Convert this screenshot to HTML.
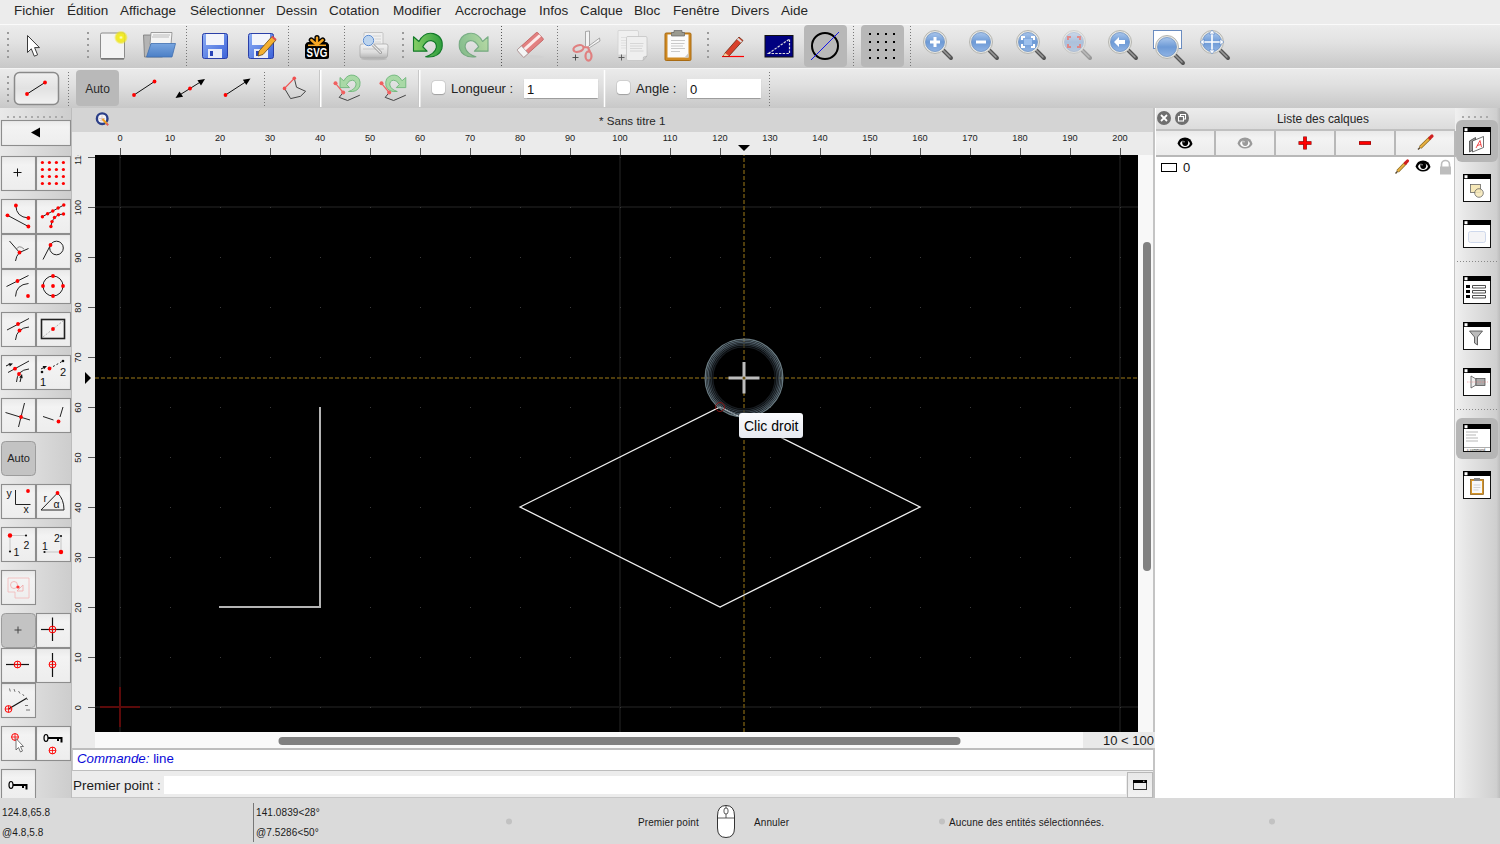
<!DOCTYPE html><html><head><meta charset="utf-8"><style>
*{margin:0;padding:0;box-sizing:border-box}
html,body{width:1500px;height:844px;overflow:hidden;background:#ececec;font-family:"Liberation Sans",sans-serif;color:#222}
.a{position:absolute}
.t{position:absolute;white-space:nowrap;line-height:1}
#menubar{left:0;top:0;width:1500px;height:24px;background:#ececec}
#menubar span{position:absolute;top:4px;font-size:13.5px;color:#262626;line-height:1}
#tb1{left:0;top:24px;width:1500px;height:44px;background:linear-gradient(#ececec,#e2e2e2 40%,#c8c8c8);border-top:1px solid #fafafa}
#tb2{left:0;top:68px;width:1500px;height:40px;background:linear-gradient(#ebebeb,#e0e0e0 40%,#c8c8c8);border-top:1px solid #f4f4f4}
#leftp{left:0;top:108px;width:72px;height:691px;background:linear-gradient(90deg,#e9e9e9,#cdcdcd);border-right:1px solid #bcbcbc}
#titlebar{left:72px;top:108px;width:1083px;height:24px;background:#d4d4d4}
#hruler{left:72px;top:132px;width:1082px;height:23px;background:#ebebeb}
#vruler{left:72px;top:155px;width:23px;height:593px;background:#ebebeb}
#canvas{left:95px;top:155px;width:1043px;height:577px;background:#000}
#vscroll{left:1138px;top:155px;width:16px;height:577px;background:#f8f8f8}
#hscroll{left:95px;top:732px;width:1059px;height:16px;background:#f9f9f9}
#cmd{left:72px;top:748px;width:1081px;height:23px;background:#fff;border-top:2px solid #bdbdbd;border-bottom:1px solid #bdbdbd;border-left:1px solid #c8c8c8}
#prompt{left:72px;top:771px;width:1083px;height:28px;background:#ececec}
#layers{left:1153px;top:108px;width:301px;height:691px;background:#fff;border-left:2px solid #c4c4c4}
#dock{left:1454px;top:108px;width:46px;height:691px;background:linear-gradient(90deg,#f0f0f0,#e6e6e6 25%,#cfcfcf 92%,#bdbdbd);border-left:1px solid #c4c4c4}
#status{left:0;top:798px;width:1500px;height:46px;background:#dadada}
.inp{position:absolute;background:#fff;box-shadow:0 0.5px 1px rgba(0,0,0,.25)}
.cb{position:absolute;background:#fff;border-radius:3px;box-shadow:0 0 0 0.5px rgba(0,0,0,.12),0 0.5px 1px rgba(0,0,0,.2)}
.btn{position:absolute;width:34px;height:34px;background:linear-gradient(#f6f6f6,#e2e2e2);border:1px solid #8e8e8e}
.ruln{position:absolute;font-size:9.2px;color:#222;line-height:1;white-space:nowrap}
.st{position:absolute;font-size:10px;color:#1a1a1a;line-height:1;white-space:nowrap;letter-spacing:0.1px}
</style></head><body>
<div id="menubar" class="a"><span style="left:14px">Fichier</span><span style="left:67px">Édition</span><span style="left:120px">Affichage</span><span style="left:190px">Sélectionner</span><span style="left:276px">Dessin</span><span style="left:329px">Cotation</span><span style="left:393px">Modifier</span><span style="left:455px">Accrochage</span><span style="left:539px">Infos</span><span style="left:580px">Calque</span><span style="left:634px">Bloc</span><span style="left:673px">Fenêtre</span><span style="left:731px">Divers</span><span style="left:781px">Aide</span></div>
<div id="tb1" class="a"></div>
<div id="tb2" class="a"></div>
<div id="leftp" class="a"></div>
<div id="titlebar" class="a"></div>
<div id="hruler" class="a"></div>
<div id="vruler" class="a"></div>
<div id="canvas" class="a"></div>
<div id="vscroll" class="a"></div>
<div id="hscroll" class="a"></div>
<div id="cmd" class="a"></div>
<div id="prompt" class="a"></div>
<div id="layers" class="a"></div>
<div id="dock" class="a"></div>
<div id="status" class="a"></div>
<div class="cb" style="left:432px;top:81px;width:13px;height:13px"></div>
<div class="t" style="left:451px;top:82px;font-size:13px;color:#222">Longueur :</div>
<div class="inp" style="left:524px;top:79px;width:74px;height:19px"></div>
<div class="t" style="left:527px;top:83px;font-size:13px;color:#111">1</div>
<div class="cb" style="left:617px;top:81px;width:13px;height:13px"></div>
<div class="t" style="left:636px;top:82px;font-size:13px;color:#222">Angle :</div>
<div class="inp" style="left:687px;top:79px;width:74px;height:19px"></div>
<div class="t" style="left:690px;top:83px;font-size:13px;color:#111">0</div>
<div class="t" style="left:599px;top:114.5px;font-size:11.6px;color:#262626">* Sans titre 1</div>
<div class="a" style="left:95px;top:131px;width:1043px;height:17px;overflow:hidden">
<div class="ruln" style="left:5px;top:3px;width:40px;text-align:center">0</div>
<div class="ruln" style="left:55px;top:3px;width:40px;text-align:center">10</div>
<div class="ruln" style="left:105px;top:3px;width:40px;text-align:center">20</div>
<div class="ruln" style="left:155px;top:3px;width:40px;text-align:center">30</div>
<div class="ruln" style="left:205px;top:3px;width:40px;text-align:center">40</div>
<div class="ruln" style="left:255px;top:3px;width:40px;text-align:center">50</div>
<div class="ruln" style="left:305px;top:3px;width:40px;text-align:center">60</div>
<div class="ruln" style="left:355px;top:3px;width:40px;text-align:center">70</div>
<div class="ruln" style="left:405px;top:3px;width:40px;text-align:center">80</div>
<div class="ruln" style="left:455px;top:3px;width:40px;text-align:center">90</div>
<div class="ruln" style="left:505px;top:3px;width:40px;text-align:center">100</div>
<div class="ruln" style="left:555px;top:3px;width:40px;text-align:center">110</div>
<div class="ruln" style="left:605px;top:3px;width:40px;text-align:center">120</div>
<div class="ruln" style="left:655px;top:3px;width:40px;text-align:center">130</div>
<div class="ruln" style="left:705px;top:3px;width:40px;text-align:center">140</div>
<div class="ruln" style="left:755px;top:3px;width:40px;text-align:center">150</div>
<div class="ruln" style="left:805px;top:3px;width:40px;text-align:center">160</div>
<div class="ruln" style="left:855px;top:3px;width:40px;text-align:center">170</div>
<div class="ruln" style="left:905px;top:3px;width:40px;text-align:center">180</div>
<div class="ruln" style="left:955px;top:3px;width:40px;text-align:center">190</div>
<div class="ruln" style="left:1005px;top:3px;width:40px;text-align:center">200</div>
</div>
<div class="a" style="left:72px;top:155px;width:16px;height:577px;overflow:hidden">
<div class="ruln" style="left:-12.7px;top:547.5px;width:40px;text-align:center;transform:rotate(-90deg)">0</div>
<div class="ruln" style="left:-12.7px;top:497.5px;width:40px;text-align:center;transform:rotate(-90deg)">10</div>
<div class="ruln" style="left:-12.7px;top:447.5px;width:40px;text-align:center;transform:rotate(-90deg)">20</div>
<div class="ruln" style="left:-12.7px;top:397.5px;width:40px;text-align:center;transform:rotate(-90deg)">30</div>
<div class="ruln" style="left:-12.7px;top:347.5px;width:40px;text-align:center;transform:rotate(-90deg)">40</div>
<div class="ruln" style="left:-12.7px;top:297.5px;width:40px;text-align:center;transform:rotate(-90deg)">50</div>
<div class="ruln" style="left:-12.7px;top:247.5px;width:40px;text-align:center;transform:rotate(-90deg)">60</div>
<div class="ruln" style="left:-12.7px;top:197.5px;width:40px;text-align:center;transform:rotate(-90deg)">70</div>
<div class="ruln" style="left:-12.7px;top:147.5px;width:40px;text-align:center;transform:rotate(-90deg)">80</div>
<div class="ruln" style="left:-12.7px;top:97.5px;width:40px;text-align:center;transform:rotate(-90deg)">90</div>
<div class="ruln" style="left:-12.7px;top:47.5px;width:40px;text-align:center;transform:rotate(-90deg)">100</div>
<div class="ruln" style="left:-12.7px;top:-2.5px;width:40px;text-align:center;transform:rotate(-90deg)">110</div>
</div>
<div class="t" style="left:77px;top:751.5px;font-size:13.3px;color:#0a0ad8"><i>Commande:</i> line</div>
<div class="t" style="left:73px;top:779px;font-size:13.5px;color:#1a1a1a">Premier point :</div>
<div class="a" style="left:72px;top:796.5px;width:1081px;height:1.5px;background:#c6c6c6"></div>
<div class="inp" style="left:164px;top:776px;width:962px;height:18px;box-shadow:none"></div>
<div class="a" style="left:1127px;top:772px;width:26px;height:26px;background:linear-gradient(#e8e8e8,#f2f2f2);border:1px solid #b8b8b8"></div>
<div class="a" style="left:1083px;top:732px;width:72px;height:16px;background:#e9e9e9"></div>
<div class="t" style="left:1103px;top:734px;font-size:13px;color:#1a1a1a">10 &lt; 100</div>
<div class="a" style="left:1156px;top:108px;width:299px;height:23px;background:linear-gradient(#ececec,#dcdcdc);border-bottom:2px solid #c0c0c0"></div>
<div class="t" style="left:1277px;top:113.5px;font-size:11.9px;color:#262626">Liste des calques</div>
<div class="a" style="left:1156px;top:131px;width:60px;height:26px;background:linear-gradient(#e9e9e9,#f3f3f3 30%,#ececec);border-right:2px solid #b8b8b8;border-bottom:2px solid #b8b8b8"></div>
<div class="a" style="left:1216px;top:131px;width:60px;height:26px;background:linear-gradient(#e9e9e9,#f3f3f3 30%,#ececec);border-right:2px solid #b8b8b8;border-bottom:2px solid #b8b8b8"></div>
<div class="a" style="left:1276px;top:131px;width:60px;height:26px;background:linear-gradient(#e9e9e9,#f3f3f3 30%,#ececec);border-right:2px solid #b8b8b8;border-bottom:2px solid #b8b8b8"></div>
<div class="a" style="left:1336px;top:131px;width:60px;height:26px;background:linear-gradient(#e9e9e9,#f3f3f3 30%,#ececec);border-right:2px solid #b8b8b8;border-bottom:2px solid #b8b8b8"></div>
<div class="a" style="left:1396px;top:131px;width:60px;height:26px;background:linear-gradient(#e9e9e9,#f3f3f3 30%,#ececec);border-right:2px solid #b8b8b8;border-bottom:2px solid #b8b8b8"></div>
<div class="t" style="left:1183px;top:161px;font-size:13px;color:#111">0</div>
<div class="st" style="left:2px;top:808px">124.8,65.8</div>
<div class="st" style="left:2px;top:828px">@4.8,5.8</div>
<div class="a" style="left:253px;top:803px;width:1px;height:39px;background:#777"></div>
<div class="st" style="left:256px;top:808px">141.0839&lt;28°</div>
<div class="st" style="left:256px;top:828px">@7.5286&lt;50°</div>
<div class="st" style="left:638px;top:818px">Premier point</div>
<div class="st" style="left:754px;top:818px">Annuler</div>
<div class="st" style="left:949px;top:818px">Aucune des entités sélectionnées.</div>
<svg class="a" style="left:0;top:0;pointer-events:none" width="1500" height="844" viewBox="0 0 1500 844">
<g>
<clipPath id="cv"><rect x="95" y="155" width="1043" height="577"/></clipPath>
<g clip-path="url(#cv)">
<line x1="120" y1="155" x2="120" y2="732" stroke="#131313" stroke-width="2"/>
<line x1="620" y1="155" x2="620" y2="732" stroke="#131313" stroke-width="2"/>
<line x1="1120" y1="155" x2="1120" y2="732" stroke="#131313" stroke-width="2"/>
<line x1="95" y1="207" x2="1138" y2="207" stroke="#131313" stroke-width="2"/>
<line x1="95" y1="707" x2="1138" y2="707" stroke="#131313" stroke-width="2"/>
<path d="M120 707h1v1h-1zM120 657h1v1h-1zM120 607h1v1h-1zM120 557h1v1h-1zM120 507h1v1h-1zM120 457h1v1h-1zM120 407h1v1h-1zM120 357h1v1h-1zM120 307h1v1h-1zM120 257h1v1h-1zM120 207h1v1h-1zM120 157h1v1h-1zM170 707h1v1h-1zM170 657h1v1h-1zM170 607h1v1h-1zM170 557h1v1h-1zM170 507h1v1h-1zM170 457h1v1h-1zM170 407h1v1h-1zM170 357h1v1h-1zM170 307h1v1h-1zM170 257h1v1h-1zM170 207h1v1h-1zM170 157h1v1h-1zM220 707h1v1h-1zM220 657h1v1h-1zM220 607h1v1h-1zM220 557h1v1h-1zM220 507h1v1h-1zM220 457h1v1h-1zM220 407h1v1h-1zM220 357h1v1h-1zM220 307h1v1h-1zM220 257h1v1h-1zM220 207h1v1h-1zM220 157h1v1h-1zM270 707h1v1h-1zM270 657h1v1h-1zM270 607h1v1h-1zM270 557h1v1h-1zM270 507h1v1h-1zM270 457h1v1h-1zM270 407h1v1h-1zM270 357h1v1h-1zM270 307h1v1h-1zM270 257h1v1h-1zM270 207h1v1h-1zM270 157h1v1h-1zM320 707h1v1h-1zM320 657h1v1h-1zM320 607h1v1h-1zM320 557h1v1h-1zM320 507h1v1h-1zM320 457h1v1h-1zM320 407h1v1h-1zM320 357h1v1h-1zM320 307h1v1h-1zM320 257h1v1h-1zM320 207h1v1h-1zM320 157h1v1h-1zM370 707h1v1h-1zM370 657h1v1h-1zM370 607h1v1h-1zM370 557h1v1h-1zM370 507h1v1h-1zM370 457h1v1h-1zM370 407h1v1h-1zM370 357h1v1h-1zM370 307h1v1h-1zM370 257h1v1h-1zM370 207h1v1h-1zM370 157h1v1h-1zM420 707h1v1h-1zM420 657h1v1h-1zM420 607h1v1h-1zM420 557h1v1h-1zM420 507h1v1h-1zM420 457h1v1h-1zM420 407h1v1h-1zM420 357h1v1h-1zM420 307h1v1h-1zM420 257h1v1h-1zM420 207h1v1h-1zM420 157h1v1h-1zM470 707h1v1h-1zM470 657h1v1h-1zM470 607h1v1h-1zM470 557h1v1h-1zM470 507h1v1h-1zM470 457h1v1h-1zM470 407h1v1h-1zM470 357h1v1h-1zM470 307h1v1h-1zM470 257h1v1h-1zM470 207h1v1h-1zM470 157h1v1h-1zM520 707h1v1h-1zM520 657h1v1h-1zM520 607h1v1h-1zM520 557h1v1h-1zM520 507h1v1h-1zM520 457h1v1h-1zM520 407h1v1h-1zM520 357h1v1h-1zM520 307h1v1h-1zM520 257h1v1h-1zM520 207h1v1h-1zM520 157h1v1h-1zM570 707h1v1h-1zM570 657h1v1h-1zM570 607h1v1h-1zM570 557h1v1h-1zM570 507h1v1h-1zM570 457h1v1h-1zM570 407h1v1h-1zM570 357h1v1h-1zM570 307h1v1h-1zM570 257h1v1h-1zM570 207h1v1h-1zM570 157h1v1h-1zM620 707h1v1h-1zM620 657h1v1h-1zM620 607h1v1h-1zM620 557h1v1h-1zM620 507h1v1h-1zM620 457h1v1h-1zM620 407h1v1h-1zM620 357h1v1h-1zM620 307h1v1h-1zM620 257h1v1h-1zM620 207h1v1h-1zM620 157h1v1h-1zM670 707h1v1h-1zM670 657h1v1h-1zM670 607h1v1h-1zM670 557h1v1h-1zM670 507h1v1h-1zM670 457h1v1h-1zM670 407h1v1h-1zM670 357h1v1h-1zM670 307h1v1h-1zM670 257h1v1h-1zM670 207h1v1h-1zM670 157h1v1h-1zM720 707h1v1h-1zM720 657h1v1h-1zM720 607h1v1h-1zM720 557h1v1h-1zM720 507h1v1h-1zM720 457h1v1h-1zM720 407h1v1h-1zM720 357h1v1h-1zM720 307h1v1h-1zM720 257h1v1h-1zM720 207h1v1h-1zM720 157h1v1h-1zM770 707h1v1h-1zM770 657h1v1h-1zM770 607h1v1h-1zM770 557h1v1h-1zM770 507h1v1h-1zM770 457h1v1h-1zM770 407h1v1h-1zM770 357h1v1h-1zM770 307h1v1h-1zM770 257h1v1h-1zM770 207h1v1h-1zM770 157h1v1h-1zM820 707h1v1h-1zM820 657h1v1h-1zM820 607h1v1h-1zM820 557h1v1h-1zM820 507h1v1h-1zM820 457h1v1h-1zM820 407h1v1h-1zM820 357h1v1h-1zM820 307h1v1h-1zM820 257h1v1h-1zM820 207h1v1h-1zM820 157h1v1h-1zM870 707h1v1h-1zM870 657h1v1h-1zM870 607h1v1h-1zM870 557h1v1h-1zM870 507h1v1h-1zM870 457h1v1h-1zM870 407h1v1h-1zM870 357h1v1h-1zM870 307h1v1h-1zM870 257h1v1h-1zM870 207h1v1h-1zM870 157h1v1h-1zM920 707h1v1h-1zM920 657h1v1h-1zM920 607h1v1h-1zM920 557h1v1h-1zM920 507h1v1h-1zM920 457h1v1h-1zM920 407h1v1h-1zM920 357h1v1h-1zM920 307h1v1h-1zM920 257h1v1h-1zM920 207h1v1h-1zM920 157h1v1h-1zM970 707h1v1h-1zM970 657h1v1h-1zM970 607h1v1h-1zM970 557h1v1h-1zM970 507h1v1h-1zM970 457h1v1h-1zM970 407h1v1h-1zM970 357h1v1h-1zM970 307h1v1h-1zM970 257h1v1h-1zM970 207h1v1h-1zM970 157h1v1h-1zM1020 707h1v1h-1zM1020 657h1v1h-1zM1020 607h1v1h-1zM1020 557h1v1h-1zM1020 507h1v1h-1zM1020 457h1v1h-1zM1020 407h1v1h-1zM1020 357h1v1h-1zM1020 307h1v1h-1zM1020 257h1v1h-1zM1020 207h1v1h-1zM1020 157h1v1h-1zM1070 707h1v1h-1zM1070 657h1v1h-1zM1070 607h1v1h-1zM1070 557h1v1h-1zM1070 507h1v1h-1zM1070 457h1v1h-1zM1070 407h1v1h-1zM1070 357h1v1h-1zM1070 307h1v1h-1zM1070 257h1v1h-1zM1070 207h1v1h-1zM1070 157h1v1h-1zM1120 707h1v1h-1zM1120 657h1v1h-1zM1120 607h1v1h-1zM1120 557h1v1h-1zM1120 507h1v1h-1zM1120 457h1v1h-1zM1120 407h1v1h-1zM1120 357h1v1h-1zM1120 307h1v1h-1zM1120 257h1v1h-1zM1120 207h1v1h-1zM1120 157h1v1h-1z" fill="#3a3a3a"/>
<line x1="95" y1="378" x2="1138" y2="378" stroke="#4f3d0c" stroke-width="2" stroke-dasharray="4 2"/>
<line x1="744" y1="155" x2="744" y2="732" stroke="#4f3d0c" stroke-width="2" stroke-dasharray="4 2" stroke-dashoffset="3"/>
<path d="M100 707H140M120 687V727" stroke="#5c0a0a" stroke-width="2"/>
<path d="M320 407V607H219" stroke="#b4b4b4" fill="none" stroke-width="2"/>
<path d="M520 507L720 407L920 507L720 607Z" stroke="#f0f0f0" fill="none" stroke-width="1.3"/>
<g opacity=".9">
<circle cx="744" cy="378" r="38.9" fill="none" stroke="#74878f" stroke-width="1.3"/>
<circle cx="744" cy="378" r="37.4" fill="none" stroke="#5f707b" stroke-width="1.2"/>
<circle cx="744" cy="378" r="35.9" fill="none" stroke="#53626d" stroke-width="1.2"/>
<circle cx="744" cy="378" r="34.4" fill="none" stroke="#3f4b54" stroke-width="1.2"/>
<circle cx="744" cy="378" r="32.8" fill="none" stroke="#2b343b" stroke-width="1.3"/>
<circle cx="744" cy="378" r="31.2" fill="none" stroke="#1a1f24" stroke-width="1.3"/>
</g>
<path d="M728.5 378H759.5M744 362V393.5" stroke="#bdbdbd" stroke-width="3"/>
<circle cx="744" cy="378" r="1.5" fill="#6a5010"/>
<circle cx="720" cy="407" r="4.5" fill="none" stroke="#8c1212" stroke-width=".9"/>
</g></g>
<defs>
<linearGradient id="lens" x1="0" y1="0" x2="0" y2="1"><stop offset="0" stop-color="#a9c6ec"/><stop offset="0.5" stop-color="#6d9ad6"/><stop offset="1" stop-color="#8fb3e4"/></linearGradient>
<linearGradient id="flop" x1="0" y1="0" x2="1" y2="1"><stop offset="0" stop-color="#8fb0f5"/><stop offset="1" stop-color="#3c62d8"/></linearGradient>
<linearGradient id="fold" x1="0" y1="0" x2="0" y2="1"><stop offset="0" stop-color="#79a6e0"/><stop offset="1" stop-color="#4b7fc6"/></linearGradient>
<radialGradient id="glow"><stop offset="0" stop-color="#ffffe0"/><stop offset="0.3" stop-color="#f4ee20"/><stop offset="0.7" stop-color="#eee41a" stop-opacity=".85"/><stop offset="1" stop-color="#f0e820" stop-opacity="0"/></radialGradient>
</defs>
<rect x="7" y="32" width="2" height="2" fill="#9a9a9a"/><rect x="7" y="38" width="2" height="2" fill="#9a9a9a"/><rect x="7" y="44" width="2" height="2" fill="#9a9a9a"/><rect x="7" y="50" width="2" height="2" fill="#9a9a9a"/><rect x="7" y="56" width="2" height="2" fill="#9a9a9a"/>
<path d="M27.5 35.5V52.5L31.3 48.8L34.3 56.2L37.6 54.8L34.6 47.6H39.5Z" fill="#fff" stroke="#3a3a3a" stroke-width="1" stroke-linejoin="round"/>
<rect x="87" y="32" width="2" height="2" fill="#9a9a9a"/><rect x="87" y="38" width="2" height="2" fill="#9a9a9a"/><rect x="87" y="44" width="2" height="2" fill="#9a9a9a"/><rect x="87" y="50" width="2" height="2" fill="#9a9a9a"/><rect x="87" y="56" width="2" height="2" fill="#9a9a9a"/>
<rect x="100.5" y="33" width="24" height="26" rx="1.5" fill="#f3f3f3" stroke="#8c8c8c" stroke-width="1"/>
<rect x="101" y="58" width="23" height="1.5" fill="#777"/>
<circle cx="121" cy="37.5" r="7" fill="url(#glow)"/>
<path d="M143.5 35h8l1 1h10v21h-18z" fill="#b4b4b4" stroke="#777" stroke-width=".8"/>
<path d="M151 32.5h21l-1 12h-21z" fill="#f4f4f4" stroke="#888" stroke-width=".8"/>
<path d="M153 35h17M152 37h17" stroke="#bbb" stroke-width="1"/>
<path d="M151 43.5h24.5l-3.5 13.5h-25.5z" fill="url(#fold)" stroke="#3f6fb0" stroke-width=".8"/>
<line x1="186.5" y1="26" x2="186.5" y2="67" stroke="#777" stroke-width="1" stroke-dasharray="1 2"/>
<rect x="202.5" y="33.5" width="25" height="25" rx="2" fill="url(#flop)" stroke="#2a3fa8" stroke-width="1"/>
<rect x="206" y="34" width="18" height="11" fill="#f2f4fb"/>
<rect x="208" y="49" width="14" height="9" fill="#e8ecf8"/>
<rect x="210" y="51" width="3" height="5" fill="#2a45b8"/>
<rect x="248.5" y="33.5" width="25" height="25" rx="2" fill="url(#flop)" stroke="#2a3fa8" stroke-width="1"/>
<rect x="252" y="34" width="18" height="11" fill="#f2f4fb"/>
<rect x="254" y="49" width="14" height="9" fill="#e8ecf8"/>
<rect x="256" y="51" width="3" height="5" fill="#2a45b8"/>
<path d="M259 51L272 36.5L276 40L263 54.5L258 56Z" fill="#f4b030" stroke="#6a4a10" stroke-width=".8"/>
<path d="M272 36.5L276 40" stroke="#e05050" stroke-width="2"/>
<line x1="288.5" y1="26" x2="288.5" y2="67" stroke="#777" stroke-width="1" stroke-dasharray="1 2"/>
<g stroke="#000" stroke-width="5.2" stroke-linecap="round"><path d="M317 45L317 37.6M317 45L311.3 40M317 45L322.7 40M317 45L308.5 44.5M317 45L325.5 44.5"/></g>
<rect x="305" y="43" width="24" height="16" rx="2.5" fill="#000"/>
<g stroke="#f6a623" stroke-width="2.4" stroke-linecap="round"><path d="M317 45L317 37.6M317 45L311.3 40M317 45L322.7 40"/></g>
<path d="M308 45.3H326" stroke="#f6a623" stroke-width="1.5"/>
<text transform="translate(317 57) scale(.82 1)" font-family="Liberation Sans" font-weight="bold" font-size="12" fill="#fff" text-anchor="middle">SVG</text>
<line x1="344.5" y1="26" x2="344.5" y2="67" stroke="#777" stroke-width="1" stroke-dasharray="1 2"/>
<rect x="364" y="32.5" width="19" height="15" rx="1" fill="#efefef" stroke="#bbb" stroke-width=".8"/>
<path d="M366 36h15M366 39h15M366 42h15" stroke="#d4d4d4" stroke-width="1"/>
<defs><linearGradient id="prn" x1="0" y1="0" x2="0" y2="1"><stop offset="0" stop-color="#f4f4f4"/><stop offset=".6" stop-color="#dcdcdc"/><stop offset="1" stop-color="#b4b4b4"/></linearGradient></defs>
<path d="M360 46Q360 44 362 44H386Q388 44 388 46L387.5 56Q387 58 385 58H362Q360 58 360 56Z" fill="url(#prn)" stroke="#aaa" stroke-width=".8"/>
<ellipse cx="374" cy="59" rx="13" ry="1.3" fill="#aaa" opacity=".6"/>
<path d="M363 49h21" stroke="#c8c8c8" stroke-width="1"/>
<path d="M372.5 44.5L380.5 52.5" stroke="#999" stroke-width="3" stroke-linecap="round"/><path d="M372.5 44.5L380.5 52.5" stroke="#e8e8e8" stroke-width="1.2" stroke-linecap="round"/>
<circle cx="368.5" cy="40.5" r="6.2" fill="#fff" opacity=".7"/>
<circle cx="368.5" cy="40.5" r="5.2" fill="#bcd4ee" stroke="#5a8ad0" stroke-width="1"/>
<rect x="402" y="32" width="2" height="2" fill="#9a9a9a"/><rect x="402" y="38" width="2" height="2" fill="#9a9a9a"/><rect x="402" y="44" width="2" height="2" fill="#9a9a9a"/><rect x="402" y="50" width="2" height="2" fill="#9a9a9a"/><rect x="402" y="56" width="2" height="2" fill="#9a9a9a"/>
<defs><linearGradient id="undog" x1="0" y1="0" x2="1" y2="0"><stop offset="0" stop-color="#86cf66"/><stop offset="1" stop-color="#2f9e3e"/></linearGradient></defs>
<path d="M340 77.5L340 87.6L349.5 87.6L346.5 84.5Q349 79.8 352.5 80.2Q356.3 81 356 85Q355 89.5 348.5 91.5Q357.5 92.5 359.8 86Q361.5 77.5 354 75.3Q347.5 73.8 343.8 80.8Z" transform="translate(413.5 33.6) scale(1.43) translate(-340 -75.3)" fill="url(#undog)" stroke="#137a2a" stroke-width=".8" stroke-linejoin="round"/>
<path d="M340 77.5L340 87.6L349.5 87.6L346.5 84.5Q349 79.8 352.5 80.2Q356.3 81 356 85Q355 89.5 348.5 91.5Q357.5 92.5 359.8 86Q361.5 77.5 354 75.3Q347.5 73.8 343.8 80.8Z" transform="translate(488 33.6) scale(-1.43 1.43) translate(-340 -75.3)" fill="url(#undog)" stroke="#137a2a" stroke-width=".8" stroke-linejoin="round" opacity=".5"/>
<line x1="501.5" y1="26" x2="501.5" y2="67" stroke="#555" stroke-width="1" stroke-dasharray="1 2"/>
<ellipse cx="532" cy="57" rx="12" ry="1.8" fill="#d0d0d0"/>
<g transform="rotate(-42 530 45)"><rect x="517" y="40" width="27" height="10" rx="1" fill="#e28080" stroke="#c06060" stroke-width=".8"/><rect x="517" y="43" width="27" height="3" fill="#fbeaea"/><rect x="517" y="40" width="6" height="10" fill="#f5f5f5" stroke="#999" stroke-width=".6"/></g>
<line x1="557.5" y1="26" x2="557.5" y2="67" stroke="#777" stroke-width="1" stroke-dasharray="1 2"/>
<path d="M585.5 46.5L585.5 31.5L589.5 31L589.5 46M587.5 47L599.5 38L600 41L589 48" fill="#f4f4f4" stroke="#8a8a8a" stroke-width=".7"/>
<path d="M583 47L588 47.5L590 52" fill="none" stroke="#e08080" stroke-width="2.2"/>
<ellipse cx="578.5" cy="48.5" rx="5.2" ry="3.2" fill="none" stroke="#e08080" stroke-width="2.2" transform="rotate(-18 578.5 48.5)"/>
<ellipse cx="588.5" cy="56" rx="3" ry="4.6" fill="none" stroke="#e08080" stroke-width="2.2"/>
<path d="M572.5 57.5h6M575.5 54.5v6" stroke="#444" stroke-width=".9"/>
<path d="M618 31.5Q617.5 30.5 619 30.5H637Q638.5 30.5 638.5 32V55H618Z" fill="#f0f0f0" stroke="#d0d0d0" stroke-width=".8"/>
<path d="M621 37.5h8M621 40.5h8M621 43h8M621 45.5h8M621 48h8" stroke="#dcdcdc" stroke-width=".8"/>
<path d="M626.5 37.5Q626.5 36.5 628 36.5H646Q647 36.5 647 38V56L643 60.5H628Q626.5 60.5 626.5 59Z" fill="#efefef" stroke="#c4c4c4" stroke-width=".8"/>
<path d="M643 60.5L643.5 57L647 56Z" fill="#d4d4d4" stroke="#aaa" stroke-width=".5"/>
<path d="M630 43.5h13.5M630 46h13M630 48.5h12M630 51h13.5" stroke="#d0d0d0" stroke-width=".8"/>
<path d="M618.5 57.5h6M621.5 54.5v6" stroke="#555" stroke-width=".9"/>
<rect x="665" y="33" width="26" height="27.5" rx="1.2" fill="#d08a22" stroke="#a86a12" stroke-width="1"/>
<path d="M667.5 34.5H688.5V57.5H667.5Z" fill="#fbfbfb"/>
<path d="M684.5 57.5L688.5 53V57.5Z" fill="#c8c8c8"/>
<path d="M671 40.5h14M671 43.5h13.5M671 46h12M671 48.5h14M671 51.5h9" stroke="#c4c4c4" stroke-width=".9"/>
<path d="M674 30.5h8v2h2.5v3.5h-13v-3.5h2.5z" fill="#9a9a90" stroke="#666" stroke-width=".7"/>
<rect x="707" y="32" width="2" height="2" fill="#9a9a9a"/><rect x="707" y="38" width="2" height="2" fill="#9a9a9a"/><rect x="707" y="44" width="2" height="2" fill="#9a9a9a"/><rect x="707" y="50" width="2" height="2" fill="#9a9a9a"/><rect x="707" y="56" width="2" height="2" fill="#9a9a9a"/>
<path d="M722 56.5h22" stroke="#f00" stroke-width="1.2"/>
<path d="M725 53L739 37L743 40.5L729 56L723.5 56Z" fill="#d9402a" stroke="#6a2810" stroke-width=".8"/>
<path d="M737.5 38.5L741.5 42" stroke="#ddd" stroke-width="2"/>
<path d="M723.5 56L725 53L729 56Z" fill="#f2d2a0"/>
<rect x="765" y="35.5" width="28" height="21.5" fill="#000080" stroke="#111" stroke-width="1"/>
<path d="M768.5 53.5L789.5 39V53.5Z" fill="none" stroke="#ddd" stroke-width="1.2" stroke-dasharray="2.5 1.2"/>
<rect x="804" y="25" width="43" height="42" rx="4" fill="#b8b8b8"/>
<circle cx="825" cy="46" r="13" fill="none" stroke="#000" stroke-width="2"/>
<path d="M811 60L839 32" stroke="#1515e8" stroke-width="1"/>
<line x1="853.5" y1="26" x2="853.5" y2="67" stroke="#777" stroke-width="1" stroke-dasharray="1 2"/>
<rect x="861" y="25" width="43" height="42" rx="4" fill="#b8b8b8"/>
<rect x="869" y="33" width="2" height="2" fill="#000"/>
<rect x="869" y="41" width="2" height="2" fill="#000"/>
<rect x="869" y="49" width="2" height="2" fill="#000"/>
<rect x="869" y="57" width="2" height="2" fill="#000"/>
<rect x="877" y="33" width="2" height="2" fill="#000"/>
<rect x="877" y="41" width="2" height="2" fill="#000"/>
<rect x="877" y="49" width="2" height="2" fill="#000"/>
<rect x="877" y="57" width="2" height="2" fill="#000"/>
<rect x="885" y="33" width="2" height="2" fill="#000"/>
<rect x="885" y="41" width="2" height="2" fill="#000"/>
<rect x="885" y="49" width="2" height="2" fill="#000"/>
<rect x="885" y="57" width="2" height="2" fill="#000"/>
<rect x="893" y="33" width="2" height="2" fill="#000"/>
<rect x="893" y="41" width="2" height="2" fill="#000"/>
<rect x="893" y="49" width="2" height="2" fill="#000"/>
<rect x="893" y="57" width="2" height="2" fill="#000"/>
<line x1="910.5" y1="26" x2="910.5" y2="67" stroke="#777" stroke-width="1" stroke-dasharray="1 2"/>
<g><path d="M942 49L951 58" stroke="#555" stroke-width="4" stroke-linecap="round"/><path d="M943 50L950 57" stroke="#999" stroke-width="1.5" stroke-linecap="round"/><circle cx="935" cy="42" r="11.5" fill="#e6e6e2" stroke="#b5b5b0" stroke-width="1"/><circle cx="935" cy="42" r="9.5" fill="url(#lens)" stroke="#6f93c4" stroke-width="0.8"/><path d="M930 42h10M935 37v10" stroke="#fff" stroke-width="3"/></g>
<g><path d="M988 49L997 58" stroke="#555" stroke-width="4" stroke-linecap="round"/><path d="M989 50L996 57" stroke="#999" stroke-width="1.5" stroke-linecap="round"/><circle cx="981" cy="42" r="11.5" fill="#e6e6e2" stroke="#b5b5b0" stroke-width="1"/><circle cx="981" cy="42" r="9.5" fill="url(#lens)" stroke="#6f93c4" stroke-width="0.8"/><path d="M976 42h10" stroke="#fff" stroke-width="3"/></g>
<g><path d="M1035 49L1044 58" stroke="#555" stroke-width="4" stroke-linecap="round"/><path d="M1036 50L1043 57" stroke="#999" stroke-width="1.5" stroke-linecap="round"/><circle cx="1028" cy="42" r="11.5" fill="#e6e6e2" stroke="#b5b5b0" stroke-width="1"/><circle cx="1028" cy="42" r="9.5" fill="url(#lens)" stroke="#6f93c4" stroke-width="0.8"/><path d="M1022 40v-3h3M1031 37h3v3M1034 44v3h-3M1025 47h-3v-3" fill="none" stroke="#fff" stroke-width="2"/><rect x="1024" y="39" width="8" height="6" fill="#9cc0ee"/></g>
<g opacity="0.45"><path d="M1081 49L1090 58" stroke="#555" stroke-width="4" stroke-linecap="round"/><path d="M1082 50L1089 57" stroke="#999" stroke-width="1.5" stroke-linecap="round"/><circle cx="1074" cy="42" r="11.5" fill="#e6e6e2" stroke="#b5b5b0" stroke-width="1"/><circle cx="1074" cy="42" r="9.5" fill="url(#lens)" stroke="#6f93c4" stroke-width="0.8"/><path d="M1068 40v-3h3M1077 37h3v3M1080 44v3h-3M1071 47h-3v-3" fill="none" stroke="#e02020" stroke-width="2"/></g>
<g><path d="M1127 49L1136 58" stroke="#555" stroke-width="4" stroke-linecap="round"/><path d="M1128 50L1135 57" stroke="#999" stroke-width="1.5" stroke-linecap="round"/><circle cx="1120" cy="42" r="11.5" fill="#e6e6e2" stroke="#b5b5b0" stroke-width="1"/><circle cx="1120" cy="42" r="9.5" fill="url(#lens)" stroke="#6f93c4" stroke-width="0.8"/><path d="M1114 42l5-5v3h6v4h-6v3z" fill="#fff"/></g>
<rect x="1153.5" y="30.5" width="28" height="18" fill="#fff" stroke="#6a8cc0" stroke-width="1"/>
<g><path d="M1174 54L1183 63" stroke="#555" stroke-width="4" stroke-linecap="round"/><path d="M1175 55L1182 62" stroke="#999" stroke-width="1.5" stroke-linecap="round"/><circle cx="1167" cy="47" r="11.5" fill="#e6e6e2" stroke="#b5b5b0" stroke-width="1"/><circle cx="1167" cy="47" r="9.5" fill="url(#lens)" stroke="#6f93c4" stroke-width="0.8"/></g>
<g><path d="M1219 49L1228 58" stroke="#555" stroke-width="4" stroke-linecap="round"/><path d="M1220 50L1227 57" stroke="#999" stroke-width="1.5" stroke-linecap="round"/><circle cx="1212" cy="42" r="11.5" fill="#e6e6e2" stroke="#b5b5b0" stroke-width="1"/><circle cx="1212" cy="42" r="9.5" fill="url(#lens)" stroke="#6f93c4" stroke-width="0.8"/><path d="M1212 31v22M1201 42h22" stroke="#fff" stroke-width="1.6"/><path d="M1212 30l-3 4h6zM1212 54l-3-4h6zM1200 42l4-3v6zM1224 42l-4-3v6z" fill="#fff" stroke="#4a7ac0" stroke-width=".5"/></g>
<rect x="7" y="76" width="2" height="2" fill="#9a9a9a"/><rect x="7" y="82" width="2" height="2" fill="#9a9a9a"/><rect x="7" y="88" width="2" height="2" fill="#9a9a9a"/><rect x="7" y="94" width="2" height="2" fill="#9a9a9a"/><rect x="7" y="100" width="2" height="2" fill="#9a9a9a"/>
<rect x="14.5" y="72.5" width="44" height="32" rx="5" fill="url(#pbtn)" stroke="#8a8a8a" stroke-width="1.5"/>
<defs><linearGradient id="pbtn" x1="0" y1="0" x2="0" y2="1"><stop offset="0" stop-color="#f0f0f0"/><stop offset=".5" stop-color="#e2e2e2"/><stop offset="1" stop-color="#f2f2f2"/></linearGradient></defs>
<line x1="27" y1="94" x2="45" y2="82.5" stroke="#111" stroke-width="1"/><circle cx="27" cy="94" r="1.9" fill="#ff0000"/><circle cx="45" cy="82.5" r="1.9" fill="#ff0000"/>
<line x1="68.5" y1="72" x2="68.5" y2="106" stroke="#777" stroke-dasharray="1 2"/>
<rect x="76" y="70" width="43" height="36" rx="4" fill="#b9b9b9"/>
<text x="97.5" y="93" font-family="Liberation Sans" font-size="12" fill="#2a2a2a" text-anchor="middle">Auto</text>
<line x1="134" y1="95" x2="154.5" y2="81.5" stroke="#111" stroke-width="1"/><circle cx="134" cy="95" r="1.9" fill="#ff0000"/><circle cx="154.5" cy="81.5" r="1.9" fill="#ff0000"/>
<line x1="178" y1="96" x2="202" y2="81" stroke="#111" stroke-width="1"/><path d="M175.5 98.0L179.5 91.5L183.1 96.7Z" fill="#000"/><path d="M205.0 79.0L201.0 85.5L197.4 80.3Z" fill="#000"/><circle cx="190" cy="88.5" r="1.9" fill="#ff0000"/>
<line x1="225.5" y1="95" x2="247" y2="81" stroke="#111" stroke-width="1"/><path d="M250.5 78.5L246.3 85.0L242.9 79.7Z" fill="#000"/><circle cx="225.5" cy="95" r="1.9" fill="#ff0000"/>
<line x1="264.5" y1="72" x2="264.5" y2="106" stroke="#777" stroke-dasharray="1 2"/>
<path d="M294.3 78.3L296.5 87.2L305.6 91.3L300.5 96.3L290.6 98.6L284.5 88.4" fill="none" stroke="#444" stroke-width="1"/>
<line x1="284.5" y1="88.4" x2="294.3" y2="78.3" stroke="#f05050" stroke-width="1.2"/><circle cx="294.3" cy="78.3" r="1.8" fill="#f05050"/><circle cx="284.5" cy="88.4" r="1.8" fill="#f05050"/>
<rect x="319.5" y="70" width="2" height="37" fill="#fff"/><rect x="319" y="70" width="1" height="37" fill="#c8c8c8"/>
<path d="M340 77.5L340 87.6L349.5 87.6L346.5 84.5Q349 79.8 352.5 80.2Q356.3 81 356 85Q355 89.5 348.5 91.5Q357.5 92.5 359.8 86Q361.5 77.5 354 75.3Q347.5 73.8 343.8 80.8Z" fill="#a9d9a6" stroke="#6fb77c" stroke-width=".9" stroke-linejoin="round"/>
<path d="M340 77.5L340 87.6L349.5 87.6L346.5 84.5Q349 79.8 352.5 80.2Q356.3 81 356 85Q355 89.5 348.5 91.5Q357.5 92.5 359.8 86Q361.5 77.5 354 75.3Q347.5 73.8 343.8 80.8Z" transform="translate(745.8 0) scale(-1 1)" fill="#a9d9a6" stroke="#6fb77c" stroke-width=".9" stroke-linejoin="round"/>
<path d="M343.2 92.5L339.2 97.4L347.6 100.5L359.8 95.2" fill="none" stroke="#444" stroke-width="1"/>
<line x1="335.5" y1="83.3" x2="343.2" y2="92.5" stroke="#f06060" stroke-width="1.2"/><circle cx="335.5" cy="83.3" r="2" fill="#f06060"/><circle cx="343.2" cy="92.5" r="2" fill="#f06060"/>
<path d="M389.2 92.5L385.2 97.4L393.6 100.5L405.8 95.2" fill="none" stroke="#444" stroke-width="1"/>
<line x1="381.5" y1="83.3" x2="389.2" y2="92.5" stroke="#f06060" stroke-width="1.2"/><circle cx="381.5" cy="83.3" r="2" fill="#f06060"/><circle cx="389.2" cy="92.5" r="2" fill="#f06060"/>
<rect x="418.5" y="70" width="2" height="37" fill="#fff"/><rect x="418" y="70" width="1" height="37" fill="#c8c8c8"/>
<line x1="769.5" y1="72" x2="769.5" y2="106" stroke="#777" stroke-dasharray="1 2"/>
<line x1="604.5" y1="70" x2="604.5" y2="107" stroke="#fff" stroke-width="1.5"/>
<clipPath id="lp"><rect x="0" y="108" width="72" height="690"/></clipPath><g clip-path="url(#lp)">
<defs><linearGradient id="btng" x1="0" y1="0" x2="0" y2="1"><stop offset="0" stop-color="#e9e9e9"/><stop offset="0.25" stop-color="#f3f3f3"/><stop offset="1" stop-color="#ededed"/></linearGradient></defs>
<rect x="7" y="116" width="2" height="2" fill="#aaa"/><rect x="13" y="116" width="2" height="2" fill="#aaa"/><rect x="19" y="116" width="2" height="2" fill="#aaa"/><rect x="25" y="116" width="2" height="2" fill="#aaa"/><rect x="31" y="116" width="2" height="2" fill="#aaa"/><rect x="37" y="116" width="2" height="2" fill="#aaa"/><rect x="43" y="116" width="2" height="2" fill="#aaa"/><rect x="49" y="116" width="2" height="2" fill="#aaa"/><rect x="55" y="116" width="2" height="2" fill="#aaa"/><rect x="61" y="116" width="2" height="2" fill="#aaa"/>
<rect x="1.5" y="120.5" width="69" height="25" fill="url(#btng)" stroke="#8d8d8d" stroke-width="1.1"/>
<path d="M31 132.5L40 127.5V137.5Z" fill="#000"/>
<rect x="1.5" y="156.5" width="34" height="34" fill="url(#btng)" stroke="#8d8d8d" stroke-width="1.1"/>
<rect x="36.5" y="156.5" width="34" height="34" fill="url(#btng)" stroke="#8d8d8d" stroke-width="1.1"/>
<path d="M13.5 172.5h8M17.5 168.5v8" stroke="#111" stroke-width="1"/>
<circle cx="42.4" cy="162.5" r="1.6" fill="#ff0000"/>
<circle cx="42.4" cy="169.5" r="1.6" fill="#ff0000"/>
<circle cx="42.4" cy="176.5" r="1.6" fill="#ff0000"/>
<circle cx="42.4" cy="183.5" r="1.6" fill="#ff0000"/>
<circle cx="49.4" cy="162.5" r="1.6" fill="#ff0000"/>
<circle cx="49.4" cy="169.5" r="1.6" fill="#ff0000"/>
<circle cx="49.4" cy="176.5" r="1.6" fill="#ff0000"/>
<circle cx="49.4" cy="183.5" r="1.6" fill="#ff0000"/>
<circle cx="56.4" cy="162.5" r="1.6" fill="#ff0000"/>
<circle cx="56.4" cy="169.5" r="1.6" fill="#ff0000"/>
<circle cx="56.4" cy="176.5" r="1.6" fill="#ff0000"/>
<circle cx="56.4" cy="183.5" r="1.6" fill="#ff0000"/>
<circle cx="63.4" cy="162.5" r="1.6" fill="#ff0000"/>
<circle cx="63.4" cy="169.5" r="1.6" fill="#ff0000"/>
<circle cx="63.4" cy="176.5" r="1.6" fill="#ff0000"/>
<circle cx="63.4" cy="183.5" r="1.6" fill="#ff0000"/>
<rect x="1.5" y="199.5" width="34" height="34" fill="url(#btng)" stroke="#8d8d8d" stroke-width="1.1"/>
<rect x="36.5" y="199.5" width="34" height="34" fill="url(#btng)" stroke="#8d8d8d" stroke-width="1.1"/>
<line x1="7.5" y1="215.3" x2="28.4" y2="226.5" stroke="#222" stroke-width="1"/>
<path d="M15.9 205.5Q16 217 28.4 218" fill="none" stroke="#222" stroke-width="1"/>
<circle cx="7.5" cy="215.3" r="1.9" fill="#ff0000"/><circle cx="28.4" cy="226.5" r="1.9" fill="#ff0000"/><circle cx="15.9" cy="205.5" r="1.9" fill="#ff0000"/><circle cx="28.4" cy="218" r="1.9" fill="#ff0000"/>
<path d="M42.4 216.7L63.8 205M50.9 226.5Q52 218 58.5 214.7L63.5 214" fill="none" stroke="#222" stroke-width="1"/>
<circle cx="42.4" cy="216.7" r="1.7" fill="#ff0000"/>
<circle cx="47.6" cy="213.7" r="1.7" fill="#ff0000"/>
<circle cx="52.8" cy="211" r="1.7" fill="#ff0000"/>
<circle cx="58.1" cy="208" r="1.7" fill="#ff0000"/>
<circle cx="63.8" cy="205" r="1.7" fill="#ff0000"/>
<circle cx="50.9" cy="226.5" r="1.7" fill="#ff0000"/>
<circle cx="52" cy="221.6" r="1.7" fill="#ff0000"/>
<circle cx="54.5" cy="217.5" r="1.7" fill="#ff0000"/>
<circle cx="58.5" cy="214.7" r="1.7" fill="#ff0000"/>
<circle cx="63.5" cy="214" r="1.7" fill="#ff0000"/>
<rect x="1.5" y="234.5" width="34" height="34" fill="url(#btng)" stroke="#8d8d8d" stroke-width="1.1"/>
<rect x="36.5" y="234.5" width="34" height="34" fill="url(#btng)" stroke="#8d8d8d" stroke-width="1.1"/>
<path d="M9.5 241L19.5 252.5L28.5 248.5M19.5 252.5Q16 256 15.5 261" fill="none" stroke="#222" stroke-width="1"/>
<path d="M16.5 249Q19 244.5 24 249" fill="none" stroke="#444" stroke-width=".6"/>
<circle cx="19.5" cy="252.5" r="1.9" fill="#ff0000"/>
<circle cx="56.5" cy="248" r="6.8" fill="none" stroke="#222" stroke-width="1"/>
<line x1="43" y1="259.5" x2="50.5" y2="245" stroke="#222" stroke-width="1"/>
<circle cx="50.5" cy="245" r="1.9" fill="#ff0000"/>
<rect x="1.5" y="269.5" width="34" height="34" fill="url(#btng)" stroke="#8d8d8d" stroke-width="1.1"/>
<rect x="36.5" y="269.5" width="34" height="34" fill="url(#btng)" stroke="#8d8d8d" stroke-width="1.1"/>
<line x1="6.5" y1="286.5" x2="28.5" y2="275.5" stroke="#222" stroke-width="1"/>
<path d="M15.5 296.5Q16 284.5 28.5 283.5" fill="none" stroke="#222" stroke-width="1"/>
<circle cx="17.5" cy="281" r="1.9" fill="#ff0000"/><circle cx="28" cy="296" r="1.9" fill="#ff0000"/>
<circle cx="53" cy="286" r="10" fill="none" stroke="#222" stroke-width="1"/>
<circle cx="53" cy="286" r="1.9" fill="#ff0000"/><circle cx="53" cy="276" r="1.9" fill="#ff0000"/><circle cx="53" cy="296" r="1.9" fill="#ff0000"/><circle cx="43" cy="286" r="1.9" fill="#ff0000"/><circle cx="63" cy="286" r="1.9" fill="#ff0000"/>
<rect x="1.5" y="312.5" width="34" height="34" fill="url(#btng)" stroke="#8d8d8d" stroke-width="1.1"/>
<rect x="36.5" y="312.5" width="34" height="34" fill="url(#btng)" stroke="#8d8d8d" stroke-width="1.1"/>
<line x1="7" y1="330" x2="29" y2="318.5" stroke="#222" stroke-width="1"/>
<path d="M15.5 340Q16.5 328 29 327" fill="none" stroke="#222" stroke-width="1"/>
<circle cx="18" cy="324" r="1.9" fill="#ff0000"/><circle cx="19.5" cy="330.5" r="1.9" fill="#ff0000"/>
<rect x="41.5" y="319.5" width="23" height="19" fill="none" stroke="#222" stroke-width="1.6"/>
<line x1="43" y1="337" x2="63" y2="321" stroke="#999" stroke-width=".8" stroke-dasharray="2 1.5"/>
<circle cx="53" cy="329" r="1.9" fill="#ff0000"/>
<rect x="1.5" y="355.5" width="34" height="34" fill="url(#btng)" stroke="#8d8d8d" stroke-width="1.1"/>
<rect x="36.5" y="355.5" width="34" height="34" fill="url(#btng)" stroke="#8d8d8d" stroke-width="1.1"/>
<line x1="8" y1="372.5" x2="29" y2="361" stroke="#222" stroke-width="1"/>
<path d="M16.5 382Q17 370 29 369" fill="none" stroke="#222" stroke-width="1"/>
<line x1="6" y1="366" x2="10" y2="364" stroke="#111" stroke-width="1"/><path d="M13.0 363.5L9.9 366.6L8.6 363.2Z" fill="#111"/>
<line x1="20" y1="382" x2="21" y2="378" stroke="#111" stroke-width="1"/><path d="M22.0 374.0L22.7 378.3L19.2 377.4Z" fill="#111"/>
<circle cx="15" cy="368.7" r="1.9" fill="#ff0000"/><circle cx="19" cy="374" r="1.9" fill="#ff0000"/>
<line x1="49.5" y1="368.5" x2="63" y2="361" stroke="#222" stroke-width="1" stroke-dasharray="2 2"/>
<circle cx="49.5" cy="368.5" r="1.9" fill="#ff0000"/><circle cx="63" cy="361" r="1.3" fill="#111"/><circle cx="42" cy="372" r="1.3" fill="#111"/>
<line x1="41" y1="369" x2="44" y2="367.5" stroke="#111" stroke-width="1"/><path d="M47.0 366.0L44.1 369.3L42.6 366.1Z" fill="#111"/>
<text x="60" y="375.5" font-family="Liberation Sans" font-size="11" fill="#111" >2</text>
<text x="40" y="385.5" font-family="Liberation Sans" font-size="11" fill="#111" >1</text>
<rect x="1.5" y="398.5" width="34" height="34" fill="url(#btng)" stroke="#8d8d8d" stroke-width="1.1"/>
<rect x="36.5" y="398.5" width="34" height="34" fill="url(#btng)" stroke="#8d8d8d" stroke-width="1.1"/>
<line x1="5.5" y1="412.5" x2="30" y2="420" stroke="#222" stroke-width="1"/><line x1="24.5" y1="403" x2="18.5" y2="427" stroke="#222" stroke-width="1"/>
<circle cx="21" cy="417" r="1.9" fill="#ff0000"/>
<line x1="43" y1="416.5" x2="53.5" y2="420" stroke="#222" stroke-width="1"/><line x1="63" y1="407" x2="60" y2="417" stroke="#222" stroke-width="1"/>
<circle cx="58.5" cy="421.5" r="1.9" fill="#ff0000"/>
<rect x="1.5" y="441.5" width="34" height="34" rx="4" fill="#c3c3c3" stroke="#9c9c9c" stroke-width="1"/>
<text x="18.5" y="462" font-family="Liberation Sans" font-size="11" fill="#222" text-anchor="middle">Auto</text>
<rect x="1.5" y="484.5" width="34" height="34" fill="url(#btng)" stroke="#8d8d8d" stroke-width="1.1"/>
<rect x="36.5" y="484.5" width="34" height="34" fill="url(#btng)" stroke="#8d8d8d" stroke-width="1.1"/>
<path d="M15.5 490V504.5H30.5" fill="none" stroke="#222" stroke-width="1"/>
<text x="6.5" y="497" font-family="Liberation Sans" font-size="10.5" fill="#111" >y</text><text x="23.5" y="513" font-family="Liberation Sans" font-size="10.5" fill="#111" >x</text>
<circle cx="28" cy="491" r="1.9" fill="#ff0000"/>
<path d="M64 510H41L57.5 493Q64 499 64 510" fill="none" stroke="#222" stroke-width="1"/>
<text x="43.5" y="501.5" font-family="Liberation Sans" font-size="10.5" fill="#111" >r</text><text x="53.5" y="507.5" font-family="Liberation Sans" font-size="10.5" fill="#111" >α</text>
<circle cx="57.5" cy="493" r="1.9" fill="#ff0000"/>
<rect x="1.5" y="527.5" width="34" height="34" fill="url(#btng)" stroke="#8d8d8d" stroke-width="1.1"/>
<rect x="36.5" y="527.5" width="34" height="34" fill="url(#btng)" stroke="#8d8d8d" stroke-width="1.1"/>
<path d="M10 551.5V535.5H26" fill="none" stroke="#bbb" stroke-width=".8"/>
<circle cx="10" cy="535.5" r="2.2" fill="#ff0000"/><circle cx="26" cy="535.5" r="1.1" fill="#111"/><circle cx="10" cy="551.5" r="1.1" fill="#111"/>
<text x="23.5" y="548.5" font-family="Liberation Sans" font-size="10.5" fill="#111" >2</text><text x="13.5" y="555.5" font-family="Liberation Sans" font-size="10.5" fill="#111" >1</text>
<path d="M44.5 552H61V536" fill="none" stroke="#bbb" stroke-width=".8"/>
<circle cx="61" cy="552" r="2.2" fill="#ff0000"/><circle cx="61" cy="536" r="1.1" fill="#111"/><circle cx="44.5" cy="552" r="1.1" fill="#111"/>
<text x="54" y="541.5" font-family="Liberation Sans" font-size="10.5" fill="#111" >2</text><text x="42" y="549.5" font-family="Liberation Sans" font-size="10.5" fill="#111" >1</text>
<rect x="1.5" y="570.5" width="34" height="34" fill="url(#btng)" stroke="#8d8d8d" stroke-width="1.1"/>
<path d="M8 578h21v20h-14v-6h-7z" fill="none" stroke="#f2b8b8" stroke-width=".8"/>
<circle cx="14" cy="585" r="3.5" fill="none" stroke="#f2a8a8" stroke-width=".8"/><path d="M17 591L23 585V591Z" fill="none" stroke="#f2a8a8" stroke-width=".8"/>
<circle cx="18" cy="587" r="1.6" fill="#f33"/>
<rect x="1.5" y="613.5" width="34" height="34" rx="4" fill="#c3c3c3" stroke="#9c9c9c" stroke-width="1"/>
<rect x="36.5" y="613.5" width="34" height="34" fill="url(#btng)" stroke="#8d8d8d" stroke-width="1.1"/>
<path d="M14.5 630h7M18 626.5v7" stroke="#444" stroke-width="1"/>
<line x1="41" y1="629.5" x2="64" y2="629.5" stroke="#111" stroke-width="1.2"/><line x1="52.5" y1="617.5" x2="52.5" y2="641" stroke="#111" stroke-width="1.2"/>
<circle cx="52.5" cy="629.5" r="3.4" fill="none" stroke="#f00" stroke-width="1"/><path d="M49.1 629.5H55.9M52.5 626.1V632.9" stroke="#f00" stroke-width=".8"/>
<rect x="1.5" y="648.5" width="34" height="34" fill="url(#btng)" stroke="#8d8d8d" stroke-width="1.1"/>
<rect x="36.5" y="648.5" width="34" height="34" fill="url(#btng)" stroke="#8d8d8d" stroke-width="1.1"/>
<line x1="6" y1="664.5" x2="29" y2="664.5" stroke="#111" stroke-width="1.2"/><circle cx="17.5" cy="664.5" r="3.4" fill="none" stroke="#f00" stroke-width="1"/><path d="M14.1 664.5H20.9M17.5 661.1V667.9" stroke="#f00" stroke-width=".8"/>
<line x1="52.5" y1="653" x2="52.5" y2="677" stroke="#111" stroke-width="1.2"/><circle cx="52.5" cy="664.5" r="3.4" fill="none" stroke="#f00" stroke-width="1"/><path d="M49.1 664.5H55.9M52.5 661.1V667.9" stroke="#f00" stroke-width=".8"/>
<rect x="1.5" y="683.5" width="34" height="34" fill="url(#btng)" stroke="#8d8d8d" stroke-width="1.1"/>
<line x1="8.5" y1="709" x2="27" y2="698" stroke="#111" stroke-width="1.2"/>
<path d="M9.5 688.5l0.8 3M14 689l1 2.8M18.5 691l1.5 2.5M22.5 694l1.5 2M26 698.5l2 1.3M25 705.5h3M26 710h4" stroke="#555" stroke-width=".8"/>
<circle cx="8.5" cy="709" r="3.4" fill="none" stroke="#f00" stroke-width="1"/><path d="M5.1 709H11.9M8.5 705.6V712.4" stroke="#f00" stroke-width=".8"/>
<rect x="1.5" y="726.5" width="34" height="34" fill="url(#btng)" stroke="#8d8d8d" stroke-width="1.1"/>
<rect x="36.5" y="726.5" width="34" height="34" fill="url(#btng)" stroke="#8d8d8d" stroke-width="1.1"/>
<circle cx="15" cy="737" r="3.4" fill="none" stroke="#f00" stroke-width="1"/><path d="M11.6 737H18.4M15 733.6V740.4" stroke="#f00" stroke-width=".8"/>
<path d="M16 738.5V750L18.5 747.5L20.5 752L22.5 751L20.5 746.5H23.5Z" fill="#fff" stroke="#555" stroke-width=".8"/>
<g><ellipse cx="46" cy="738" rx="2" ry="3.5" fill="none" stroke="#000" stroke-width="1.2"/><path d="M48 738H61.5V742.5M58 738V741" stroke="#000" stroke-width="2" fill="none"/></g>
<circle cx="52.5" cy="750.5" r="3.4" fill="none" stroke="#f00" stroke-width="1"/><path d="M49.1 750.5H55.9M52.5 747.1V753.9" stroke="#f00" stroke-width=".8"/>
<rect x="1.5" y="769.5" width="34" height="32" fill="url(#btng)" stroke="#8d8d8d" stroke-width="1.1"/>
<g><ellipse cx="11" cy="785" rx="2" ry="3.5" fill="none" stroke="#000" stroke-width="1.2"/><path d="M13 785H26.5V789.5M23 785V788" stroke="#000" stroke-width="2" fill="none"/></g>
</g>
<circle cx="1164" cy="118" r="7" fill="#6f6f6f"/><path d="M1161 115l6 6M1167 115l-6 6" stroke="#fff" stroke-width="1.8"/>
<circle cx="1182" cy="118" r="7" fill="#6f6f6f"/><rect x="1178.5" y="116.5" width="5" height="4.5" fill="none" stroke="#fff" stroke-width="1.1"/><path d="M1180.5 116.5v-2h5v4.5h-2" fill="none" stroke="#fff" stroke-width="1.1"/>
<g transform="translate(1185 143) scale(1.0)"><path d="M-7.5 0.5Q-6 -5.5 0 -5.5Q6 -5.5 7.5 1Q5 5.5 0 5.5Q-5 5.5 -7.5 0.5Z" fill="#000"/><ellipse cx="0" cy="0.6" rx="4.8" ry="3.4" fill="#fff"/><ellipse cx="0.2" cy="-0.2" rx="3" ry="3.1" fill="#000"/><circle cx="-1" cy="-1.2" r=".7" fill="#fff" opacity=".8"/></g>
<g transform="translate(1245 143) scale(1.0)"><path d="M-7.5 0.5Q-6 -5.5 0 -5.5Q6 -5.5 7.5 1Q5 5.5 0 5.5Q-5 5.5 -7.5 0.5Z" fill="#9a9a9a"/><ellipse cx="0" cy="0.6" rx="4.8" ry="3.4" fill="#fff"/><ellipse cx="0.2" cy="-0.2" rx="3" ry="3.1" fill="#9a9a9a"/><circle cx="-1" cy="-1.2" r=".7" fill="#fff" opacity=".8"/></g>
<path d="M1305 136.5v13M1298.5 143h13" stroke="#7a0000" stroke-width="3.6"/><path d="M1305 137v12M1299 143h12" stroke="#f00" stroke-width="2.6"/>
<path d="M1359 143h12" stroke="#7a0000" stroke-width="3.6"/><path d="M1359.5 143h11" stroke="#f00" stroke-width="2.6"/>
<line x1="1420.159532886262" y1="147.4175932882473" x2="1430.2003892614482" y2="137.73533892646057" stroke="#8a6a20" stroke-width="3.4000000000000004"/><line x1="1420.159532886262" y1="147.4175932882473" x2="1430.2003892614482" y2="137.73533892646057" stroke="#e8b040" stroke-width="2.0"/><line x1="1429.840467113738" y1="138.0824067117527" x2="1432" y2="136" stroke="#d02020" stroke-width="3.2" stroke-linecap="round"/><line x1="1418" y1="149.5" x2="1420.159532886262" y2="147.4175932882473" stroke="#5a4a30" stroke-width="1.4"/>
<rect x="1161.5" y="163.5" width="15" height="8" fill="#fff" stroke="#000" stroke-width="1"/>
<line x1="1397.5775954845692" y1="171.33583803690715" x2="1405.7686704295256" y2="162.8034683025774" stroke="#8a6a20" stroke-width="3.4000000000000004"/><line x1="1397.5775954845692" y1="171.33583803690715" x2="1405.7686704295256" y2="162.8034683025774" stroke="#e8b040" stroke-width="2.0"/><line x1="1405.4224045154308" y1="163.16416196309285" x2="1407.5" y2="161" stroke="#d02020" stroke-width="3.2" stroke-linecap="round"/><line x1="1395.5" y1="173.5" x2="1397.5775954845692" y2="171.33583803690715" stroke="#5a4a30" stroke-width="1.4"/>
<g transform="translate(1423 166) scale(1.0)"><path d="M-7.5 0.5Q-6 -5.5 0 -5.5Q6 -5.5 7.5 1Q5 5.5 0 5.5Q-5 5.5 -7.5 0.5Z" fill="#000"/><ellipse cx="0" cy="0.6" rx="4.8" ry="3.4" fill="#fff"/><ellipse cx="0.2" cy="-0.2" rx="3" ry="3.1" fill="#000"/><circle cx="-1" cy="-1.2" r=".7" fill="#fff" opacity=".8"/></g>
<path d="M1441.5 167v-2.5a4 4 0 0 1 8 0V167" fill="none" stroke="#bdbdbd" stroke-width="1.6"/><rect x="1440" y="166.5" width="11" height="8" fill="#bdbdbd"/>
<rect x="1462" y="116" width="2" height="2" fill="#aaa"/><rect x="1468" y="116" width="2" height="2" fill="#aaa"/><rect x="1474" y="116" width="2" height="2" fill="#aaa"/><rect x="1480" y="116" width="2" height="2" fill="#aaa"/><rect x="1486" y="116" width="2" height="2" fill="#aaa"/>
<rect x="1456" y="120" width="42" height="42" rx="6" fill="#b6b6b6"/>
<rect x="1463.5" y="127.5" width="27" height="27" fill="#fff" stroke="#111" stroke-width="1"/><rect x="1463" y="127" width="28" height="5" fill="#000"/><rect x="1464.5" y="128.2" width="3" height="3" fill="#fff"/><path d="M1469.5 141L1475.5 137.5V148.5L1469.5 152Z" fill="#9a9a9a" stroke="#333" stroke-width=".7"/><path d="M1472.5 141L1483.5 136.5V147.5L1472.5 152Z" fill="#fff" stroke="#333" stroke-width=".7"/><path d="M1476 148L1480 140.5L1481.5 147M1477 145.5L1481 144.5" fill="none" stroke="#e22" stroke-width=".8"/>
<rect x="1463.5" y="174.5" width="27" height="27" fill="#fff" stroke="#111" stroke-width="1"/><rect x="1463" y="174" width="28" height="5" fill="#000"/><rect x="1464.5" y="175.2" width="3" height="3" fill="#fff"/><rect x="1470.5" y="184.5" width="10" height="8" fill="#f6e8b8" stroke="#555" stroke-width=".7"/><circle cx="1479" cy="193" r="4.3" fill="#f6e8b8" fill-opacity=".85" stroke="#555" stroke-width=".7"/>
<rect x="1463.5" y="220.5" width="27" height="27" fill="#fff" stroke="#111" stroke-width="1"/><rect x="1463" y="220" width="28" height="5" fill="#000"/><rect x="1464.5" y="221.2" width="3" height="3" fill="#fff"/><rect x="1468.5" y="231.5" width="17" height="11" rx="2" fill="#f4f4f6" stroke="#c4d0e8" stroke-width=".8"/>
<line x1="1457" y1="261.5" x2="1499" y2="261.5" stroke="#888" stroke-dasharray="1 2"/>
<rect x="1463.5" y="276.5" width="27" height="27" fill="#fff" stroke="#111" stroke-width="1"/><rect x="1463" y="276" width="28" height="5" fill="#000"/><rect x="1464.5" y="277.2" width="3" height="3" fill="#fff"/><rect x="1466" y="285" width="4" height="3" fill="#000"/><rect x="1466" y="290" width="4" height="3" fill="#000"/><rect x="1466" y="295" width="4" height="3" fill="#000"/><path d="M1472.5 285.5h13v2.5h-13zM1472.5 290.5h13v2.5h-13zM1472.5 295.5h13v2.5h-13z" fill="none" stroke="#222" stroke-width=".8"/>
<rect x="1463.5" y="322.5" width="27" height="27" fill="#fff" stroke="#111" stroke-width="1"/><rect x="1463" y="322" width="28" height="5" fill="#000"/><rect x="1464.5" y="323.2" width="3" height="3" fill="#fff"/><path d="M1469.5 331h13l-5 6v8l-3-2v-6z" fill="#bbb" stroke="#444" stroke-width=".8"/>
<rect x="1463.5" y="368.5" width="27" height="27" fill="#fff" stroke="#111" stroke-width="1"/><rect x="1463" y="368" width="28" height="5" fill="#000"/><rect x="1464.5" y="369.2" width="3" height="3" fill="#fff"/><path d="M1471 376v12l5-3v-6z" fill="#eee" stroke="#444" stroke-width=".7"/><rect x="1476" y="378.5" width="9" height="7" fill="#aaa" stroke="#444" stroke-width=".7"/><path d="M1467 382h21" stroke="#e88" stroke-width=".6" stroke-dasharray="1.5 1"/>
<line x1="1457" y1="409.5" x2="1499" y2="409.5" stroke="#888" stroke-dasharray="1 2"/>
<rect x="1456" y="418" width="42" height="41" rx="6" fill="#b6b6b6"/>
<rect x="1463.5" y="424.5" width="27" height="27" fill="#fff" stroke="#111" stroke-width="1"/><rect x="1463" y="424" width="28" height="5" fill="#000"/><rect x="1464.5" y="425.2" width="3" height="3" fill="#fff"/><path d="M1466 432h12M1466 435h10M1466 438h12M1466 441h12" stroke="#888" stroke-width=".6"/><path d="M1464 447.5h26" stroke="#777" stroke-width=".6"/><text x="1467" y="451" font-size="3.5" fill="#333" font-family="Liberation Sans">c   command</text>
<rect x="1463.5" y="471.5" width="27" height="27" fill="#fff" stroke="#111" stroke-width="1"/><rect x="1463" y="471" width="28" height="5" fill="#000"/><rect x="1464.5" y="472.2" width="3" height="3" fill="#fff"/><rect x="1470.5" y="479.5" width="13" height="15" fill="#d4952a" stroke="#8a5a10" stroke-width=".7"/><rect x="1472" y="481" width="10" height="12" fill="#f8f8f8"/><rect x="1474" y="478" width="6" height="3" fill="#888"/><path d="M1473.5 485h7M1473.5 487.5h7M1473.5 490h5" stroke="#bbb" stroke-width=".6"/>
<circle cx="102.2" cy="118.7" r="5.3" fill="#f4f4f6" stroke="#2c3f88" stroke-width="2.4"/>
<path d="M99 118.5h6M102 115.5v6M100 120.5l3-1" stroke="#c8a0a0" stroke-width=".5"/>
<path d="M102.5 119L107.3 124.2" stroke="#f0a020" stroke-width="2"/><path d="M106.5 123.4L108.2 125.2" stroke="#e06060" stroke-width="2"/>
<path d="M120.5 148V155M170.5 148V155M220.5 148V155M270.5 148V155M320.5 148V155M370.5 148V155M420.5 148V155M470.5 148V155M520.5 148V155M570.5 148V155M620.5 148V155M670.5 148V155M720.5 148V155M770.5 148V155M820.5 148V155M870.5 148V155M920.5 148V155M970.5 148V155M1020.5 148V155M1070.5 148V155M1120.5 148V155M88 707.5H95M88 657.5H95M88 607.5H95M88 557.5H95M88 507.5H95M88 457.5H95M88 407.5H95M88 357.5H95M88 307.5H95M88 257.5H95M88 207.5H95M88 157.5H95" stroke="#555" stroke-width="1"/>
<path d="M738 145H750L744 151Z" fill="#000"/>
<path d="M85 372V384L91 378Z" fill="#000"/>
<rect x="1143" y="242" width="8" height="329" rx="4" fill="#808080"/>
<rect x="278.5" y="737" width="682" height="8" rx="4" fill="#808080"/>
<rect x="1133.5" y="780.5" width="13" height="9" fill="#eee" stroke="#333" stroke-width="1"/><rect x="1133" y="780" width="14" height="3" fill="#000"/><rect x="1143" y="780.8" width="1.5" height="1.2" fill="#aaa"/>
<circle cx="509" cy="821.5" r="3" fill="#c2c2c2"/>
<circle cx="942" cy="821.5" r="3" fill="#c2c2c2"/>
<circle cx="1272" cy="821.5" r="3" fill="#c2c2c2"/>
<path d="M717.5 816Q717.5 805.5 726 805.5Q734.5 805.5 734.5 816V828Q734.5 837.5 726 837.5Q717.5 837.5 717.5 828Z" fill="#fff" stroke="#333" stroke-width="1"/>
<path d="M717.5 818H734.5M726 805.5V818" stroke="#333" stroke-width=".8"/>
<rect x="724" y="808" width="4" height="6" rx="2" fill="#fff" stroke="#333" stroke-width=".8"/>
</svg>
<div class="t" style="left:738.5px;top:412.5px;width:64px;height:25px;background:linear-gradient(#fafbfd,#e6e9f0);border-radius:3px;box-shadow:0 0.5px 1.5px rgba(0,0,0,.5)"></div>
<div class="t" style="left:744px;top:419px;font-size:14px;color:#000">Clic droit</div>
</body></html>
